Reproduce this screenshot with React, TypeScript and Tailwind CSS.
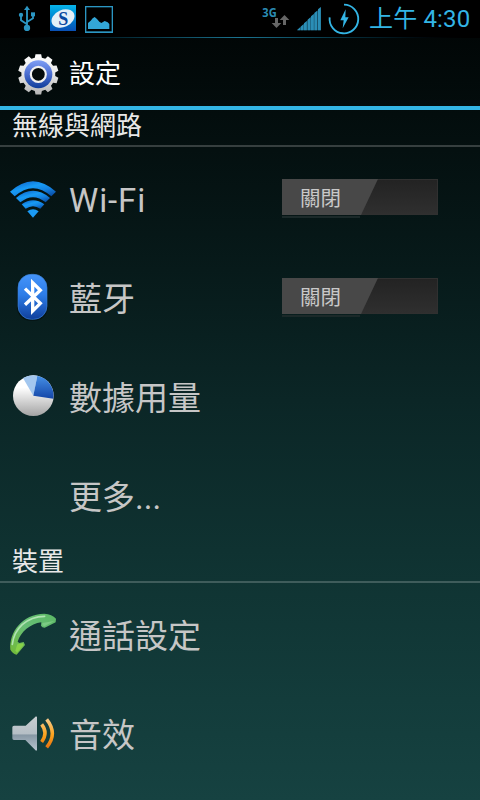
import type { ReactNode } from "react";

const FONT = "font-[Roboto,'Noto_Sans_CJK_TC',sans-serif]";

function UsbIcon() {
  return (
    <svg className="h-[26px] w-[18px]" viewBox="54 15 54 78" fill="none" stroke="#2b96c3" strokeWidth="5.5">
      <path d="M81 28V82M81 73L63 61V47M81 66L99 55V44" />
      <path d="M81 17L90 30H72Z" fill="#2b96c3" stroke="none" />
      <circle cx="81" cy="84" r="9.5" fill="#2b96c3" stroke="none" />
      <circle cx="63" cy="45" r="6.5" fill="#2b96c3" stroke="none" />
      <rect x="93" y="37" width="12" height="12" fill="#2b96c3" stroke="none" />
    </svg>
  );
}

function SyncAppIcon() {
  return (
    <div className="flex h-[26px] w-[26px] items-center justify-center bg-linear-to-b from-[#08b4ea] to-[#0a4fb4]">
      <div className="flex h-[17px] w-[24px] -rotate-[24deg] items-center justify-center rounded-[50%] bg-[#e4eff8]">
        <span className="rotate-[24deg] font-['Liberation_Serif',serif] text-[18px] leading-none font-bold text-[#0a48a0]">
          S
        </span>
      </div>
    </div>
  );
}

function PictureIcon() {
  return (
    <svg className="h-[27px] w-[28px]" viewBox="255 18 84 81">
      <rect x="256.5" y="19.5" width="81" height="77" fill="none" stroke="#2b96c3" strokeWidth="5" />
      <path d="M264 87V69L272 62L278 55L284 51L291 57L298 65L304 69L314 63L323 67L328 72V87Z" fill="#33a6d6" />
    </svg>
  );
}

function MobileDataIcon() {
  return (
    <svg className="h-[35px] w-[29px]" viewBox="33 0 87 105">
      <text
        x="37"
        y="51"
        fill="#2b8cb4"
        fontFamily="Open Sans, sans-serif"
        fontSize="39"
        fontWeight="700"
        textLength="43"
        lengthAdjust="spacingAndGlyphs"
      >
        3G
      </text>
      <path d="M75 54H84V69H94L79.5 84L65 69H75ZM99 75H108V60H118L103.5 45L89 60H99Z" fill="#666" />
    </svg>
  );
}

function SignalIcon() {
  const bars = [
    { x: 142, y: 84 },
    { x: 152, y: 75 },
    { x: 162, y: 65 },
    { x: 173, y: 54 },
    { x: 183, y: 44 },
    { x: 193, y: 34 },
    { x: 204, y: 23 },
  ];

  return (
    <svg className="h-[24px] w-[24px]" viewBox="141 20 72 72">
      <path d="M142 90L213 21V90Z" fill="#15475c" />
      {bars.map(({ x, y }) => (
        <path key={x} d={`M${x} 90V${y + 4}L${x + 8.5} ${y - 3}V90Z`} fill="#2b8eb6" />
      ))}
    </svg>
  );
}

function BatteryIcon() {
  return (
    <svg className="h-[32px] w-[32px]" viewBox="234 9 96 96">
      <path d="M282 14A43 43 0 1 1 239 52" fill="none" stroke="#33b5e5" strokeWidth="5.5" />
      <path d="M287 28L271 61H281L278 85L296 52H286Z" fill="#33b5e5" />
    </svg>
  );
}

function StatusBar() {
  return (
    <div className="flex h-[37px] bg-black">
      <div className="flex items-start pl-[18px]">
        <div className="pt-[5px]">
          <UsbIcon />
        </div>
        <div className="pt-[5px] pl-[14px]">
          <SyncAppIcon />
        </div>
        <div className="pt-[6px] pl-[9px]">
          <PictureIcon />
        </div>
      </div>
      <div className="ml-auto flex items-start pr-[9px]">
        <MobileDataIcon />
        <div className="pt-[7px] pl-[7px]">
          <SignalIcon />
        </div>
        <div className="pt-[3px] pl-[7px]">
          <BatteryIcon />
        </div>
        <span className="w-[111px] pl-[9px] text-[24px] leading-[38px] tracking-[0.15px] whitespace-nowrap text-[#33b5e5]">
          上午 4:30
        </span>
      </div>
    </div>
  );
}

function GearIcon() {
  const teeth = Array.from({ length: 10 }, (_, i) => i * 36);

  return (
    <svg className="h-[48px] w-[48px]" viewBox="42 144 144 144">
      <defs>
        <linearGradient id="gearMetal" x1="0" y1="162" x2="0" y2="285" gradientUnits="userSpaceOnUse">
          <stop offset="0" stopColor="#fff" />
          <stop offset="0.5" stopColor="#e6e6e6" />
          <stop offset="1" stopColor="#b4b4b4" />
        </linearGradient>
        <linearGradient id="gearBlue" x1="0" y1="0" x2="0" y2="1">
          <stop offset="0" stopColor="#7f9ff5" />
          <stop offset="0.5" stopColor="#4a6ccf" />
          <stop offset="1" stopColor="#0f3d9a" />
        </linearGradient>
      </defs>
      <path
        d={teeth
          .map((angle, i) => {
            const point = (offset: number, radius: number) => {
              const rad = ((angle + offset - 90) * Math.PI) / 180;
              return `${(115 + radius * Math.cos(rad)).toFixed(1)} ${(223 + radius * Math.sin(rad)).toFixed(1)}`;
            };
            return `${i === 0 ? "M" : "L"}${point(-12, 51)}L${point(-8, 61)}L${point(8, 61)}L${point(12, 51)}`;
          })
          .join("") + "Z"}
        fill="url(#gearMetal)"
      />
      <circle cx="115" cy="223" r="42" fill="url(#gearBlue)" />
      <circle cx="115" cy="223" r="22.5" fill="#040b0b" stroke="#f0f0f0" strokeWidth="6.5" />
    </svg>
  );
}

function WifiIcon() {
  return (
    <svg className="h-[48px] w-[48px]" viewBox="27 222 144 144">
      <defs>
        <linearGradient id="wifiBlue" x1="0.1" y1="0" x2="0.9" y2="1">
          <stop offset="0" stopColor="#0b5fc8" />
          <stop offset="0.4" stopColor="#189bf5" />
          <stop offset="0.65" stopColor="#1583e2" />
          <stop offset="1" stopColor="#07489f" />
        </linearGradient>
      </defs>
      <g fill="url(#wifiBlue)">
        <path d="M30 275Q99 212 168 275L154 289Q99 240 44 289Z" />
        <path d="M48 294Q99 251 150 294L137 307Q99 276 61 307Z" />
        <path d="M65 313Q99 288 133 313L121 326Q99 311 77 326Z" />
        <path d="M82 334Q99 322 116 334L99 353Z" fill="#1b9bf5" />
      </g>
    </svg>
  );
}

function BluetoothIcon() {
  return (
    <svg className="h-[48px] w-[48px]" viewBox="27 39 144 144">
      <defs>
        <linearGradient id="btBlue" x1="0" y1="0" x2="0" y2="1">
          <stop offset="0" stopColor="#4594fa" />
          <stop offset="0.45" stopColor="#2d7de8" />
          <stop offset="1" stopColor="#103f9c" />
        </linearGradient>
      </defs>
      <rect x="51" y="46" width="92" height="136" rx="40" fill="#000" opacity="0.4" />
      <rect x="54" y="43" width="87" height="135" rx="40" fill="url(#btBlue)" stroke="#3b83d8" strokeWidth="2" />
      <path d="M75 86L121 130L98 153V68L121 91L75 134" fill="none" stroke="#fff" strokeWidth="10" />
    </svg>
  );
}

function DataUsageIcon() {
  return (
    <svg className="h-[48px] w-[48px]" viewBox="27 336 144 144">
      <defs>
        <linearGradient id="pieWhite" x1="0" y1="0" x2="0" y2="1">
          <stop offset="0.3" stopColor="#fff" />
          <stop offset="1" stopColor="#a3a3a3" />
        </linearGradient>
        <linearGradient id="pieBlue" x1="0" y1="0" x2="0" y2="1">
          <stop offset="0" stopColor="#4690e6" />
          <stop offset="1" stopColor="#1446a8" />
        </linearGradient>
      </defs>
      <circle cx="100" cy="407" r="61" fill="url(#pieWhite)" />
      <path d="M100 407L69 354A61 61 0 0 1 112 347Z" fill="#a3c7ef" />
      <path d="M100 407L112 347A61 61 0 0 1 160 416Z" fill="url(#pieBlue)" />
    </svg>
  );
}

function PhoneIcon() {
  return (
    <svg className="h-[48px] w-[48px]" viewBox="27 45 144 144">
      <defs>
        <linearGradient id="phoneGreen" x1="1" y1="0" x2="0" y2="1">
          <stop offset="0" stopColor="#5cb865" />
          <stop offset="0.5" stopColor="#67be76" />
          <stop offset="1" stopColor="#72b935" />
        </linearGradient>
      </defs>
      <path
        d="M31 164C27 112 66 57 133 56Q156 58 168 71L167 82L134 98Q126 98 123 92L124 82C91 86 62 111 53 140L58 144L71 141L75 150L50 179Q40 178 31 164Z"
        fill="url(#phoneGreen)"
      />
      <path d="M37 148C42 103 79 64 134 64" fill="none" stroke="#b0e3b2" strokeWidth="5" strokeLinecap="round" />
      <path d="M127 84L163 78L133 94L127 91Z" fill="#7bcb84" />
      <path d="M52 148L69 145L70 151L51 173L46 167Z" fill="#88d248" />
    </svg>
  );
}

function SoundIcon() {
  return (
    <svg className="h-[48px] w-[48px]" viewBox="27 342 144 144">
      <defs>
        <linearGradient id="speakerGrey" x1="0" y1="0" x2="0" y2="1">
          <stop offset="0" stopColor="#c9cdd0" />
          <stop offset="0.5" stopColor="#b5bfc6" />
          <stop offset="0.55" stopColor="#8798a5" />
          <stop offset="1" stopColor="#b7c5cf" />
        </linearGradient>
        <linearGradient id="waveOrange" x1="0" y1="370" x2="0" y2="460" gradientUnits="userSpaceOnUse">
          <stop offset="0" stopColor="#f8cb8f" />
          <stop offset="0.55" stopColor="#fca31d" />
          <stop offset="1" stopColor="#e87010" />
        </linearGradient>
      </defs>
      <path d="M37 397Q37 392 42 392H77L108 364L111 366V466L108 467L76 435H42Q37 435 37 430Z" fill="url(#speakerGrey)" />
      <path d="M125 388Q145 414 125 441M140 373Q174 416 140 457" fill="none" stroke="url(#waveOrange)" strokeWidth="10.5" />
    </svg>
  );
}

function OffSwitch() {
  return (
    <div className="h-[39px] w-[156px]">
      <div className="h-[36px] border border-[#303030] bg-linear-to-b from-[#232323] to-[#2f2f2f]">
        <div className="-mt-px -ml-px h-[36px] w-[96px] bg-[#484848] pl-[18px] text-[20.5px] leading-[41px] text-[#c8c8c8] [clip-path:polygon(0_0,100%_0,79px_100%,0_100%)]">
          關閉
        </div>
      </div>
      <div className="mt-px h-[2px] w-[78px] bg-[#1b2929]" />
    </div>
  );
}

function SectionHeader({ title }: { title: string }) {
  return (
    <h2 className="h-[37px] border-b-2 border-white/20 pl-[12px] text-[26px] leading-[33px] text-[#e8e8e8]">
      {title}
    </h2>
  );
}

interface SettingRowProps {
  label: string;
  icon?: ReactNode;
  hasSwitch?: boolean;
  wide?: boolean;
}

function SettingRow({ label, icon, hasSwitch, wide }: SettingRowProps) {
  return (
    <div className="flex h-[99px] items-center pr-[42px] pl-[9px]">
      <div className="mb-px h-[48px] w-[48px]">{icon}</div>
      <span
        className={`ml-[12px] pt-[4px] text-[33px] leading-[48px] text-[#c6c6c6] ${wide ? "tracking-[0.9px]" : ""}`}
      >
        {label}
      </span>
      {hasSwitch && (
        <div className="ml-auto">
          <OffSwitch />
        </div>
      )}
    </div>
  );
}

export default function App() {
  return (
    <div
      className={`h-[800px] w-[480px] overflow-hidden bg-[linear-gradient(to_bottom,#000303_0px,#041010_150px,#071a1a_270px,#0b2626_400px,#0f3231_550px,#133c3b_700px,#164241_800px)] ${FONT}`}
    >
      <StatusBar />
      <div className="h-px bg-linear-to-r from-black via-[#1b7390] to-black" />
      <header className="flex h-[68px] items-center pl-[14px]">
        <GearIcon />
        <h1 className="pt-[4px] pl-[7px] text-[26px] leading-[40px] text-white">設定</h1>
      </header>
      <div className="h-[4px] bg-[#33b5e5]" />
      <div className="h-[39px]">
        <SectionHeader title="無線與網路" />
      </div>
      <SettingRow label="Wi-Fi" icon={<WifiIcon />} hasSwitch wide />
      <SettingRow label="藍牙" icon={<BluetoothIcon />} hasSwitch />
      <SettingRow label="數據用量" icon={<DataUsageIcon />} />
      <SettingRow label="更多..." />
      <div className="h-[40px] pt-px">
        <SectionHeader title="裝置" />
      </div>
      <SettingRow label="通話設定" icon={<PhoneIcon />} />
      <SettingRow label="音效" icon={<SoundIcon />} />
    </div>
  );
}
